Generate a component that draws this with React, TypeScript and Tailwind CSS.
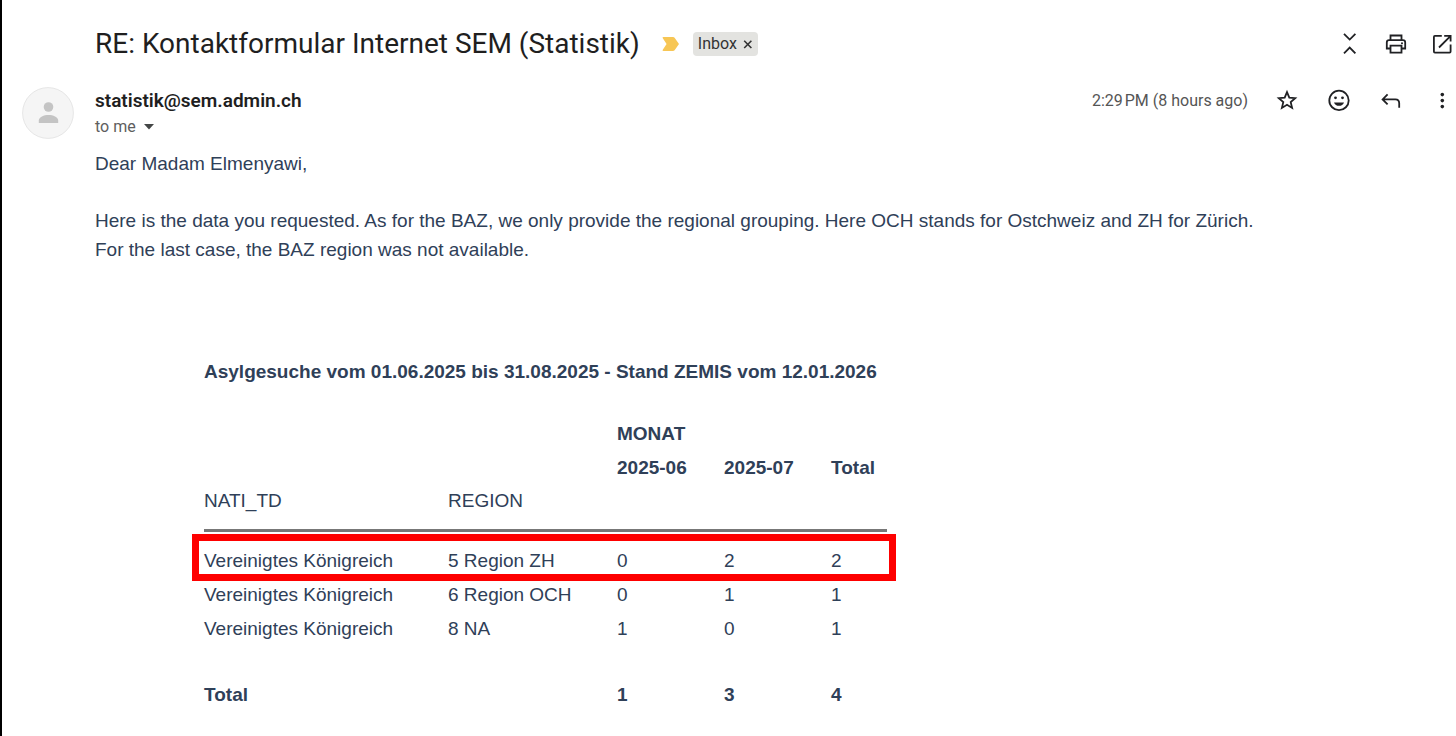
import type { ReactNode } from "react"

interface IconButtonProps {
  label: string
  children: ReactNode
}

function IconButton({ label, children }: IconButtonProps) {
  return (
    <button type="button" aria-label={label} className="w-6 h-6 shrink-0 text-[#202124]">
      <svg viewBox="0 0 24 24" className="w-6 h-6" fill="none" stroke="currentColor" strokeWidth="1.8" aria-hidden="true">
        {children}
      </svg>
    </button>
  )
}

const rows = [
  { nation: "Vereinigtes Königreich", region: "5 Region ZH", values: [0, 2, 2], highlighted: true },
  { nation: "Vereinigtes Königreich", region: "6 Region OCH", values: [0, 1, 1] },
  { nation: "Vereinigtes Königreich", region: "8 NA", values: [1, 0, 1] },
]

function SubjectBar() {
  return (
    <header className="flex items-center h-12 pl-[93px] pr-0.5">
      <h1 className="font-[Roboto,sans-serif] text-[28px] leading-9 text-[#1f1f1f]">
        RE: Kontaktformular Internet SEM (Statistik)
      </h1>
      <svg viewBox="0 0 17 14" className="w-[17px] h-3.5 ml-[22px] shrink-0" aria-hidden="true">
        <path d="M1.5 0H11Q12 0 12.6.8L17 7L12.6 13.2Q12 14 11 14H1.5Q0 14 .8 12.8L4.6 7L.8 1.2Q0 0 1.5 0Z" fill="#f7c655" />
      </svg>
      <span className="flex items-center gap-1.5 h-6 ml-3.5 px-[5px] rounded bg-[#e3e3e0] font-[Roboto,sans-serif] text-base text-[#333]">
        Inbox
        <button type="button" aria-label="Remove label Inbox">
          <svg viewBox="0 0 10 10" className="w-2.5 h-2.5" stroke="currentColor" strokeWidth="1.6" aria-hidden="true">
            <path d="M1.2 1.8L8.4 9M8.4 1.8L1.2 9" />
          </svg>
        </button>
      </span>
      <div className="flex items-center gap-[22px] ml-auto">
        <IconButton label="Collapse all">
          <path d="M6 1.9L11.7 7.6L17.4 1.9M6 21.3L11.7 15.6L17.4 21.3" />
        </IconButton>
        <IconButton label="Print all">
          <path d="M6.5 8V3.5H17.5V8M6.5 16.5H2.8V10.5Q2.8 8.2 5.1 8.2H18.9Q21.2 8.2 21.2 10.5V16.5H17.5M6.5 13.6H17.5V20.6H6.5Z" />
          <circle cx="18" cy="11.2" r="1" fill="currentColor" stroke="none" />
        </IconButton>
        <IconButton label="In new window">
          <path d="M11.8 3.9H4.9Q3.9 3.9 3.9 4.9V19.6Q3.9 20.6 4.9 20.6H19.6Q20.6 20.6 20.6 19.6V12.6M14.2 3.9H20.6V9.6M20.4 4.1L9 15.5" />
        </IconButton>
      </div>
    </header>
  )
}

function SenderBar() {
  return (
    <div className="flex items-start pl-5 pr-0.5">
      <svg viewBox="0 0 52 52" className="w-[52px] h-[52px] mt-[7px] shrink-0" aria-hidden="true">
        <circle cx="26" cy="26" r="25.4" fill="#f5f5f5" stroke="#e6e6e6" />
        <circle cx="26.5" cy="20" r="4.8" fill="#c4c4c4" />
        <path d="M16.8 36V33.5C16.8 30 22 28 26.5 28S36.2 30 36.2 33.5V36Z" fill="#c4c4c4" />
      </svg>
      <div className="ml-[21px] pt-[7px] font-[Roboto,sans-serif]">
        <div className="text-[19px] leading-7 font-semibold text-[#1f1f1f]">statistik@sem.admin.ch</div>
        <button type="button" aria-label="Show details" className="flex items-center gap-2 text-base leading-6 text-[#5e5e5e]">
          to me
          <svg viewBox="0 0 10 6" className="w-2.5 h-1.5" aria-hidden="true">
            <path d="M0 0H10L5 5.4Z" fill="#444746" />
          </svg>
        </button>
      </div>
      <div className="flex items-center h-6 mt-[9px] ml-auto">
        <time className="mr-[26px] font-[Roboto,sans-serif] text-base text-[#555]">{"2:29\u202fPM (8 hours ago)"}</time>
        <div className="flex gap-7">
          <IconButton label="Not starred">
            <path d="M13 3.2L15.3 8.7L21.2 9.2L16.7 13.1L18.1 18.9L13 15.8L7.9 18.9L9.3 13.1L4.8 9.2L10.7 8.7Z" />
          </IconButton>
          <IconButton label="Add reaction">
            <circle cx="13" cy="11.4" r="9.7" />
            <circle cx="9.5" cy="8.8" r="1.4" fill="currentColor" stroke="none" />
            <circle cx="16.5" cy="8.8" r="1.4" fill="currentColor" stroke="none" />
            <path d="M8 13.4H18Q16.6 16.8 13 16.8T8 13.4Z" fill="currentColor" stroke="none" />
          </IconButton>
          <IconButton label="Reply">
            <path d="M9.6 5.4L4.6 10.4L9.6 15.4M4.8 10.4H17.4Q21.2 10.4 21.2 14.2V18.8" />
          </IconButton>
          <IconButton label="More">
            <g fill="currentColor" stroke="none">
              <circle cx="12.3" cy="5.6" r="1.8" />
              <circle cx="12.3" cy="11.6" r="1.8" />
              <circle cx="12.3" cy="17.6" r="1.8" />
            </g>
          </IconButton>
        </div>
      </div>
    </div>
  )
}

function DataTable() {
  return (
    <table className="table-fixed w-[683px] border-separate border-spacing-0 text-left leading-[33px]">
      <caption className="pb-7 text-left font-bold whitespace-nowrap">
        Asylgesuche vom 01.06.2025 bis 31.08.2025 - Stand ZEMIS vom 12.01.2026
      </caption>
      <colgroup>
        <col className="w-[244px]" />
        <col className="w-[169px]" />
        <col className="w-[107px]" />
        <col className="w-[107px]" />
        <col className="w-14" />
      </colgroup>
      <thead>
        <tr className="h-[34px]">
          <td colSpan={2} />
          <th colSpan={3} scope="colgroup">MONAT</th>
        </tr>
        <tr className="h-[34px]">
          <td colSpan={2} />
          <th scope="col">2025-06</th>
          <th scope="col">2025-07</th>
          <th scope="col">Total</th>
        </tr>
        <tr className="h-12 align-top">
          <th scope="col" className="border-b-3 border-[#777] font-normal">NATI_TD</th>
          <th scope="col" className="border-b-3 border-[#777] font-normal">REGION</th>
          <td colSpan={3} className="border-b-3 border-[#777]" />
        </tr>
      </thead>
      <tbody>
        {rows.map((row) => (
          <tr key={row.region} className={row.highlighted ? "relative h-[45px] align-bottom" : "h-[34px]"}>
            <td>
              {row.nation}
              {row.highlighted && (
                <span className="absolute top-0.5 -bottom-1 -left-3 -right-[9px] border-7 border-[#fe0000]" />
              )}
            </td>
            <td>{row.region}</td>
            {row.values.map((value, i) => (
              <td key={i}>{value}</td>
            ))}
          </tr>
        ))}
      </tbody>
      <tfoot className="font-bold">
        <tr className="h-[66px] align-bottom">
          <th scope="row">Total</th>
          <td />
          <td>1</td>
          <td>3</td>
          <td>4</td>
        </tr>
      </tfoot>
    </table>
  )
}

export default function App() {
  return (
    <main className="min-h-screen border-l-2 border-black bg-white pt-5 pb-6">
      <SubjectBar />
      <div className="mt-3">
        <SenderBar />
      </div>
      <article className="pl-[93px] mt-2.5 font-['Liberation_Sans',Arial,sans-serif] text-[19px] leading-[29px] text-[#2f4058]">
        <p>Dear Madam Elmenyawi,</p>
        <p className="mt-7">
          Here is the data you requested. As for the BAZ, we only provide the regional grouping. Here OCH stands for Ostchweiz and ZH for Zürich.
          <br />
          For the last case, the BAZ region was not available.
        </p>
        <div className="mt-[91px] ml-[109px]">
          <DataTable />
        </div>
      </article>
    </main>
  )
}
